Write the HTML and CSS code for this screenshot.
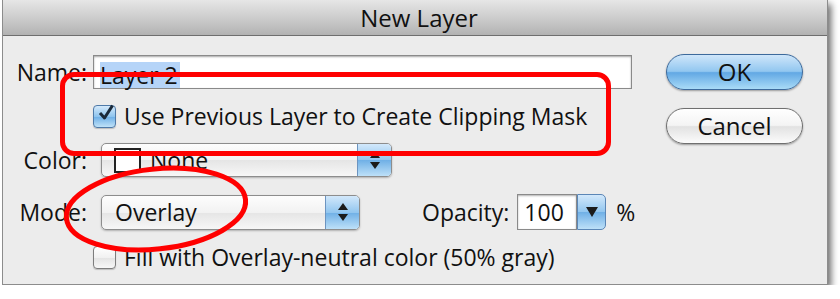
FILE: index.html
```html
<!DOCTYPE html>
<html lang="en">
<head>
    <meta charset="UTF-8">
    <title>New Layer</title>
    <link rel="stylesheet" href="styles.css">
</head>
<body>

<div class="window">
    <div class="titlebar">New Layer</div>

    <div class="content">
        <div class="form">
            <div class="row row-name">
                <span class="label">Name:</span>
                <div class="textfield"><span class="selected">Layer 2</span></div>
            </div>

            <div class="row row-check">
                <span class="check checked">
                    <svg width="18" height="18" viewBox="0 0 18 18"><path d="M3 9 L7.5 14 L15.5 1.5" fill="none" stroke="#1a2a3a" stroke-width="3" stroke-linejoin="round"/></svg>
                </span>
                <span>Use Previous Layer to Create Clipping Mask</span>
            </div>

            <div class="row row-color">
                <span class="label">Color:</span>
                <div class="popup popup-color">
                    <span class="swatch"></span>
                    <span class="popup-text">None</span>
                    <span class="arrows"><i class="up"></i><i class="down"></i></span>
                </div>
            </div>

            <div class="row row-mode">
                <span class="label">Mode:</span>
                <div class="popup popup-mode">
                    <span class="popup-text">Overlay</span>
                    <span class="arrows"><i class="up"></i><i class="down"></i></span>
                </div>
                <span class="label-opacity">Opacity:</span>
                <div class="numfield">100</div>
                <span class="numbtn"><i class="down"></i></span>
                <span class="percent">%</span>
            </div>

            <div class="row row-check row-fill">
                <span class="check"></span>
                <span>Fill with Overlay-neutral color (50% gray)</span>
            </div>
        </div>

        <div class="buttons">
            <div class="btn btn-ok">OK</div>
            <div class="btn btn-cancel">Cancel</div>
        </div>
    </div>

    <!-- red markup drawn over the dialog -->
    <div class="mark-rect"></div>
    <svg class="mark-ellipse" width="200" height="100" viewBox="0 0 200 100">
        <ellipse cx="100" cy="50" rx="90" ry="40" transform="rotate(-6 100 50)" fill="none" stroke="#ff0000" stroke-width="5"/>
    </svg>
</div>

</body>
</html>
```

FILE: styles.css
```css
body {
    margin: 0 0 0 2px;
    background: #fff;
    font-family: "Open Sans", "DejaVu Sans", sans-serif;
    font-size: 23px;
    color: #111;
}

.window {
    position: relative;
    box-sizing: border-box;
    width: 826px;
    height: 285px;
    background: #ececec;
    border: 1px solid #8c8c8c;
    border-top: none;
    box-shadow: 3px 4px 7px rgba(0, 0, 0, 0.6);
}

.titlebar {
    box-sizing: border-box;
    height: 36px;
    line-height: 35px;
    text-align: center;
    padding-left: 8px;
    font-size: 24px;
    background: linear-gradient(#e6e6e6, #c8c8c8 60%, #b2b2b2);
    border-bottom: 1px solid #6e6e6e;
}

.content {
    display: flex;
    padding: 19px 0 0 7px;
}

.form {
    flex: 1;
}

.row {
    display: flex;
    align-items: center;
}

.label {
    width: 77px;
    text-align: right;
}

/* Name */
.row-name {
    height: 34px;
}

.textfield {
    box-sizing: border-box;
    width: 539px;
    height: 34px;
    margin-left: 6px;
    padding: 3px 0 0 6px;
    background: #fff;
    border: 1px solid #8a8a8a;
    box-shadow: inset 0 1px 2px rgba(0, 0, 0, 0.35);
}

.selected {
    display: inline-block;
    height: 26px;
    line-height: 26px;
    padding-right: 2px;
    background: #b5d4f8;
}

/* checkbox rows */
.row-check {
    height: 30px;
    margin-top: 12px;
    padding-left: 83px;
    gap: 8px;
}

.check {
    box-sizing: border-box;
    width: 23px;
    height: 23px;
    display: flex;
    align-items: center;
    justify-content: center;
    border: 1px solid #7d7d7d;
    border-radius: 4px;
    background: linear-gradient(#ffffff, #f1f1f1 50%, #e3e3e3 51%, #f7f7f7);
    box-shadow: 0 1px 1px rgba(0, 0, 0, 0.2);
}

.check.checked {
    border-color: #4f7aa8;
    background: linear-gradient(#d4e9fb, #8ec4ee 50%, #6caee6 51%, #bfe2f8);
}

.check svg {
    margin: -6px 0 0 2px;
}

/* popups */
.row-color {
    height: 34px;
    margin-top: 12px;
}

.row-mode {
    height: 36px;
    margin-top: 17px;
}

.popup {
    box-sizing: border-box;
    display: flex;
    align-items: center;
    height: 34px;
    margin-left: 14px;
    border: 1px solid #8d8d8d;
    border-radius: 5px;
    overflow: hidden;
    background: linear-gradient(#fdfdfd, #f2f2f2 50%, #e5e5e5 51%, #f7f7f7);
    box-shadow: 0 1px 2px rgba(0, 0, 0, 0.25);
}

.popup-color {
    width: 291px;
}

.popup-mode {
    width: 259px;
    height: 35px;
}

.popup-text {
    flex: 1;
    padding-left: 13px;
}

.popup-color .popup-text {
    padding-left: 9px;
}

.swatch {
    box-sizing: border-box;
    width: 27px;
    height: 25px;
    margin-left: 12px;
    background: #fff;
    border: 2px solid #222;
}

.arrows,
.numbtn {
    align-self: stretch;
    width: 33px;
    display: flex;
    flex-direction: column;
    align-items: center;
    justify-content: center;
    gap: 4px;
    border-left: 1px solid #6c94c0;
    background: linear-gradient(#d2e8fb, #92c6ef 50%, #70b0e6 51%, #bde0f8);
}

.up,
.down {
    width: 0;
    height: 0;
    border-left: 5px solid transparent;
    border-right: 5px solid transparent;
}

.up {
    border-bottom: 7px solid #1b1b1b;
}

.down {
    border-top: 7px solid #1b1b1b;
}

.label-opacity {
    margin-left: 62px;
}

.numfield {
    box-sizing: border-box;
    width: 60px;
    height: 36px;
    margin-left: 8px;
    padding-left: 6px;
    line-height: 34px;
    background: #fff;
    border: 1px solid #8a8a8a;
    box-shadow: inset 0 1px 2px rgba(0, 0, 0, 0.3);
}

.numbtn {
    box-sizing: border-box;
    width: 29px;
    height: 36px;
    align-self: auto;
    border: 1px solid #5b86b6;
    border-radius: 0 5px 5px 0;
}

.numbtn .down {
    border-left-width: 6px;
    border-right-width: 6px;
    border-top-width: 10px;
}

.percent {
    margin-left: 10px;
}

.row-fill {
    margin-top: 12px;
}

/* buttons */
.buttons {
    display: flex;
    flex-direction: column;
    gap: 18px;
    margin: -1px 24px 0 0;
}

.btn {
    box-sizing: border-box;
    width: 137px;
    height: 36px;
    line-height: 33px;
    text-align: center;
    font-size: 24px;
    border-radius: 18px;
    box-shadow: 0 1px 2px rgba(0, 0, 0, 0.35);
}

.btn-ok {
    border: 1px solid #3d6a9c;
    background: linear-gradient(#cfe6fa, #92c7f0 48%, #62a8e4 52%, #a9dbf7);
}

.btn-cancel {
    border: 1px solid #6f6f6f;
    background: linear-gradient(#ffffff, #f4f4f4 48%, #e2e2e2 52%, #fbfbfb);
}

/* red annotations */
.mark-rect {
    position: absolute;
    left: 57px;
    top: 72px;
    width: 551px;
    height: 84px;
    box-sizing: border-box;
    border: 5px solid #ff0000;
    border-radius: 14px;
}

.mark-ellipse {
    position: absolute;
    left: 53px;
    top: 159px;
}
```
